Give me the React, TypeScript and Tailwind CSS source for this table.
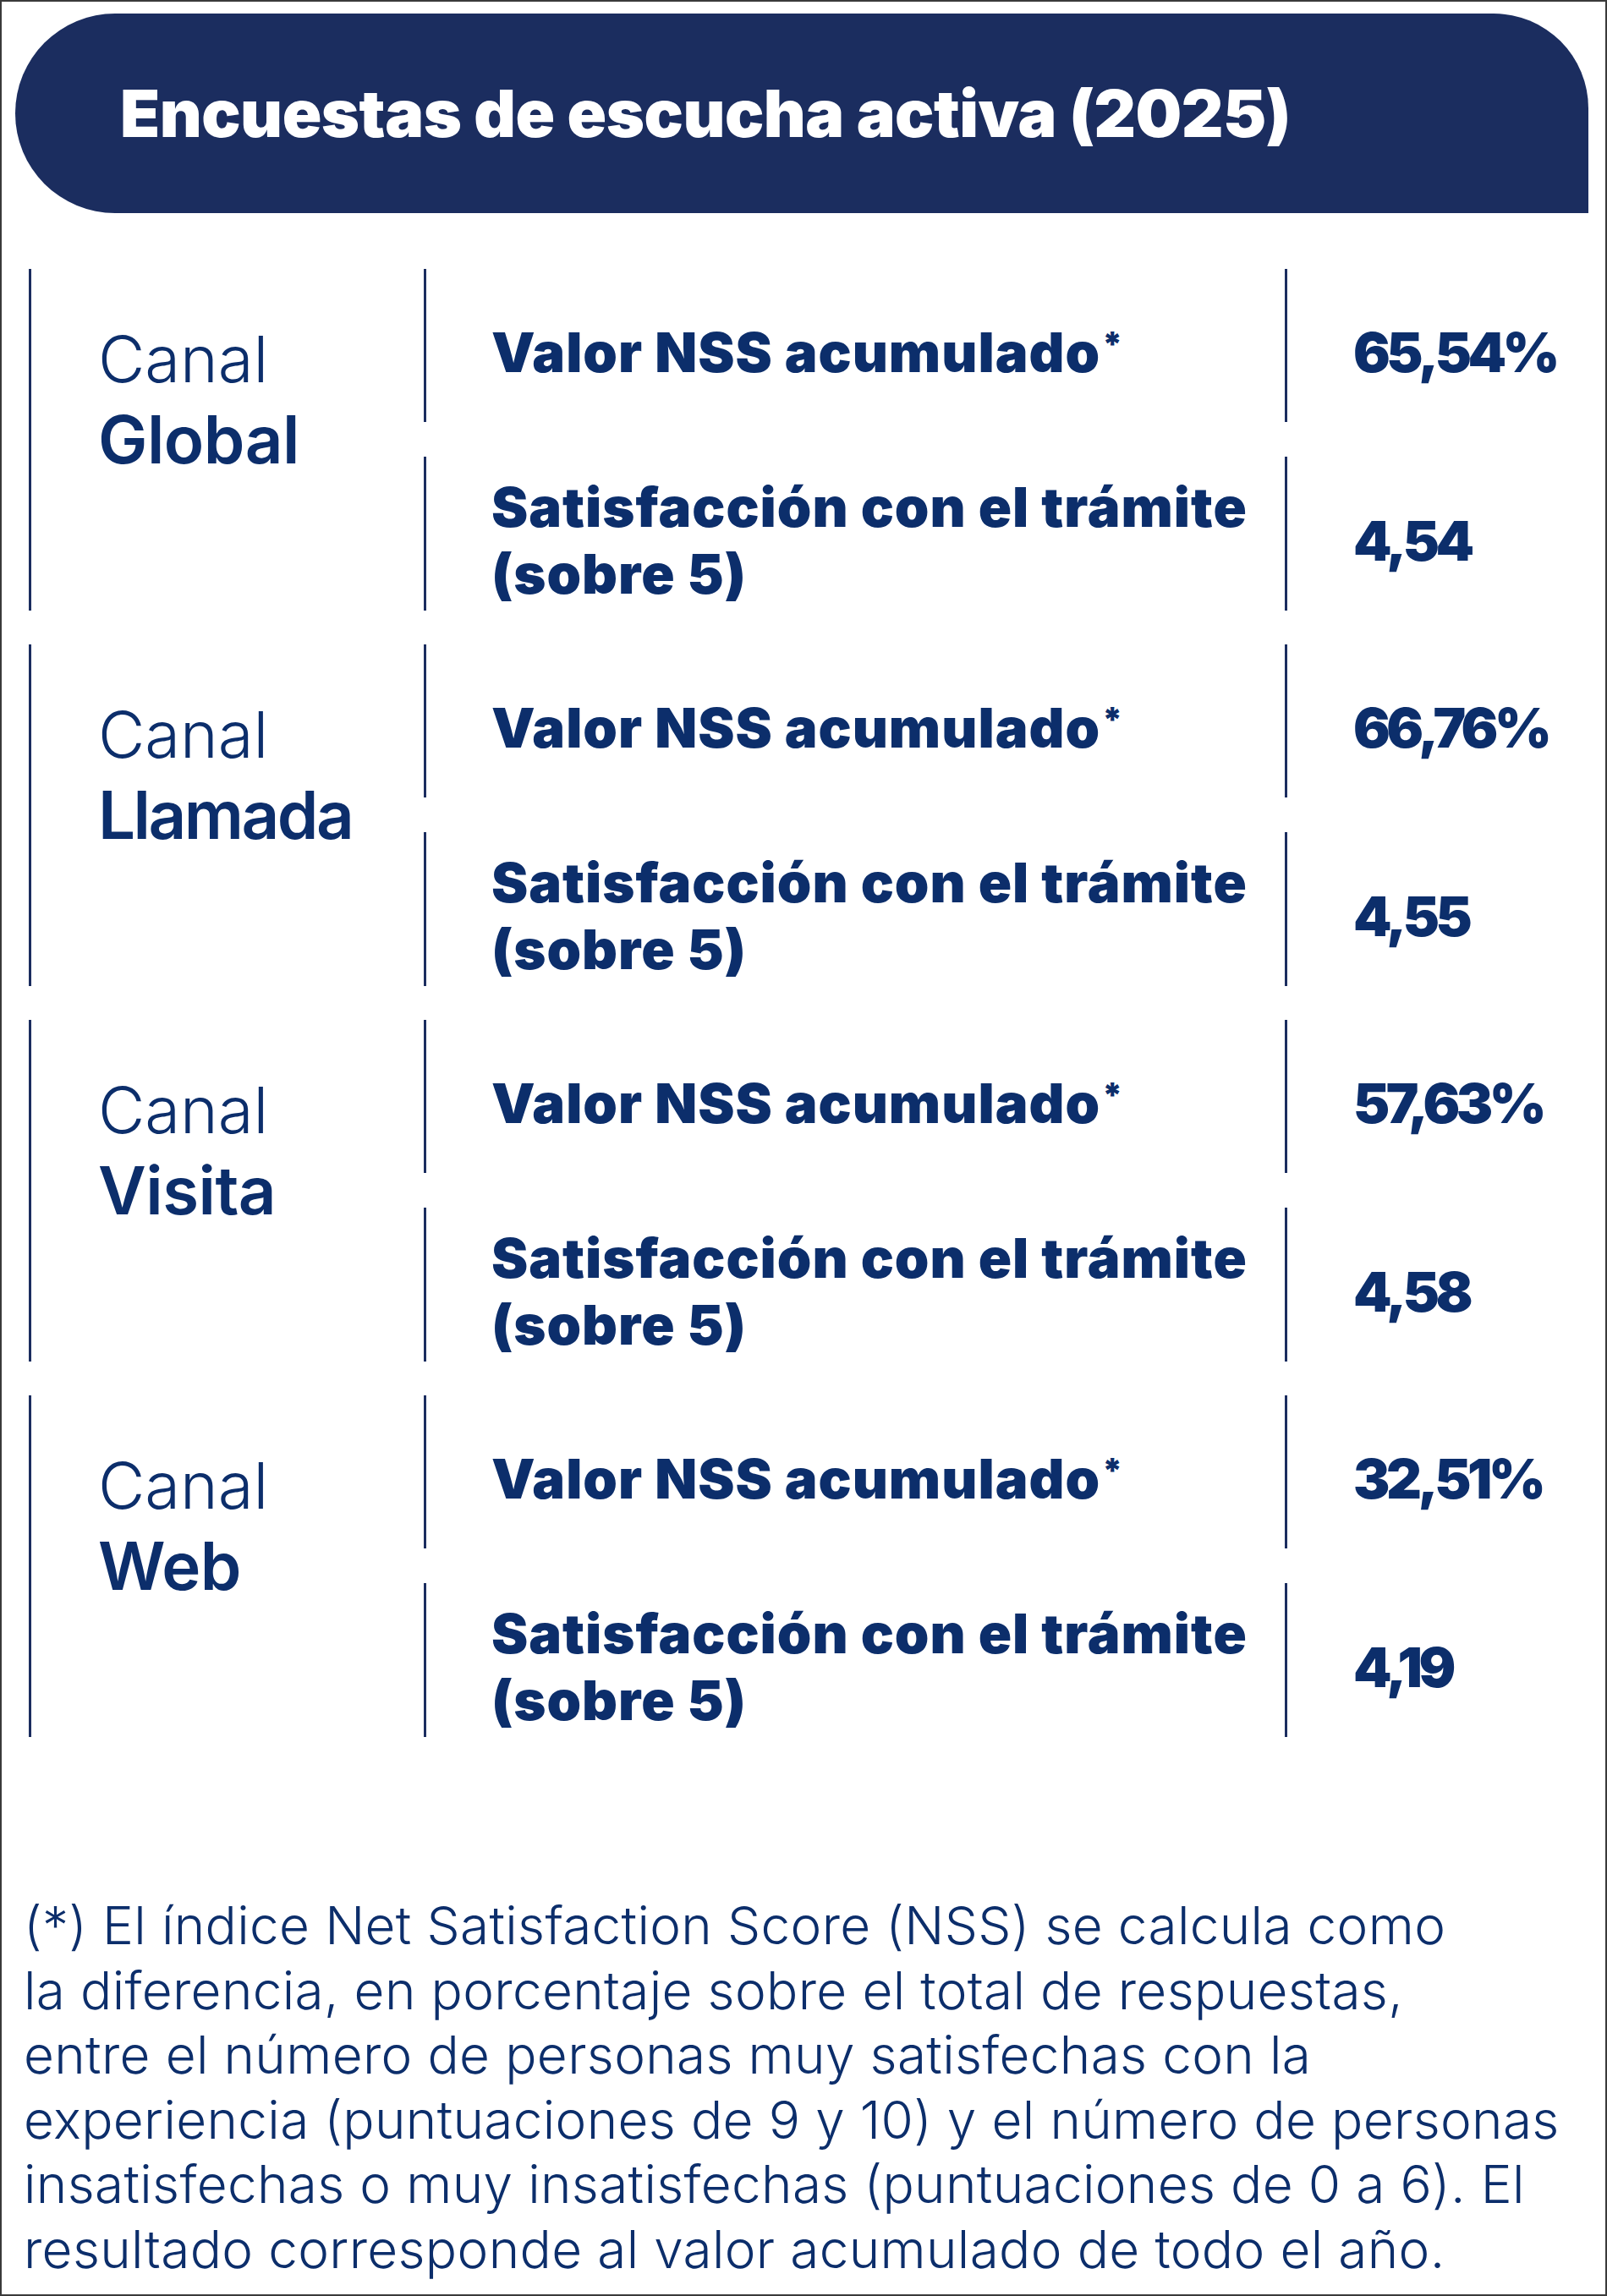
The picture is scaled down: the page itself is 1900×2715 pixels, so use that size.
import React from "react";

const groups = [
  { name: "Global", nss: "65,54%", sat: "4,54" },
  { name: "Llamada", nss: "66,76%", sat: "4,55" },
  { name: "Visita", nss: "57,63%", sat: "4,58" },
  { name: "Web", nss: "32,51%", sat: "4,19" },
];

const foot = [
  "(*) El índice Net Satisfaction Score (NSS) se calcula como",
  "la diferencia, en porcentaje sobre el total de respuestas,",
  "entre el número de personas muy satisfechas con la",
  "experiencia (puntuaciones de 9 y 10) y el número de personas",
  "insatisfechas o muy insatisfechas (puntuaciones de 0 a 6). El",
  "resultado corresponde al valor acumulado de todo el año.",
];

export default function App() {
  return (
    <div
      className="w-[1900px] h-[2715px] border-2 border-[#3a3a3a] bg-white text-[#0c2e6b] overflow-hidden"
      style={{ fontFamily: "Inter, 'Noto Sans', sans-serif" }}
    >
      <div className="mt-[14px] ml-[16px] w-[1860px] h-[236px] bg-[#1b2d5f] rounded-tl-[118px] rounded-bl-[118px] rounded-tr-[112px] flex items-center pl-[124px]">
        <h1 className="text-white text-[77px] font-black leading-none tracking-[-0.5px] whitespace-nowrap">
          Encuestas de escucha activa (2025)
        </h1>
      </div>

      <div className="mt-[66px] ml-[32px] flex flex-col gap-[40px]">
        {groups.map((g) => (
          <div key={g.name} className="flex h-[404px]">
            <div className="w-[467px] border-l-[3px] border-[#1b2d5f] pl-[79px] pt-[59px]">
              <div className="text-[76px] font-light leading-[95px]">Canal</div>
              <div
                className={
                  g.name === "Llamada"
                    ? "text-[78px] font-semibold leading-[95px] tracking-[-2.5px]"
                    : "text-[78px] font-semibold leading-[95px] tracking-[-0.5px]"
                }
              >
                {g.name}
              </div>
            </div>
            <div className="flex flex-col gap-[41px]">
              <div className="flex h-[181px]">
                <div className="w-[1018px] border-l-[3px] border-[#1b2d5f] pl-[77px] pt-[16px] flex items-center">
                  <span className="text-[65px] font-black leading-[79px] tracking-[1px] whitespace-nowrap">
                    Valor NSS acumulado
                    <span className="text-[40px] leading-none relative top-[-19px] ml-[2px]">*</span>
                  </span>
                </div>
                <div className="border-l-[3px] border-[#1b2d5f] pl-[78px] pt-[16px] flex items-center">
                  <span className="text-[65px] font-black leading-[79px] tracking-[-4.5px] whitespace-nowrap">{g.nss}</span>
                </div>
              </div>
              <div className="flex h-[182px]">
                <div className="w-[1018px] border-l-[3px] border-[#1b2d5f] pl-[77px] pt-[16px] flex items-center">
                  <div className="text-[65px] font-black leading-[79px] tracking-[1px] whitespace-nowrap">
                    <div>Satisfacción con el trámite</div>
                    <div>(sobre 5)</div>
                  </div>
                </div>
                <div className="border-l-[3px] border-[#1b2d5f] pl-[78px] pt-[16px] flex items-center">
                  <span className="text-[65px] font-black leading-[79px] tracking-[-4.5px] whitespace-nowrap">{g.sat}</span>
                </div>
              </div>
            </div>
          </div>
        ))}
      </div>

      <div className="mt-[185px] pl-[26px] text-[62px] font-light leading-[76.6px] tracking-[0.35px]">
        {foot.map((l) => (
          <div key={l} className="whitespace-nowrap">{l}</div>
        ))}
      </div>
    </div>
  );
}
